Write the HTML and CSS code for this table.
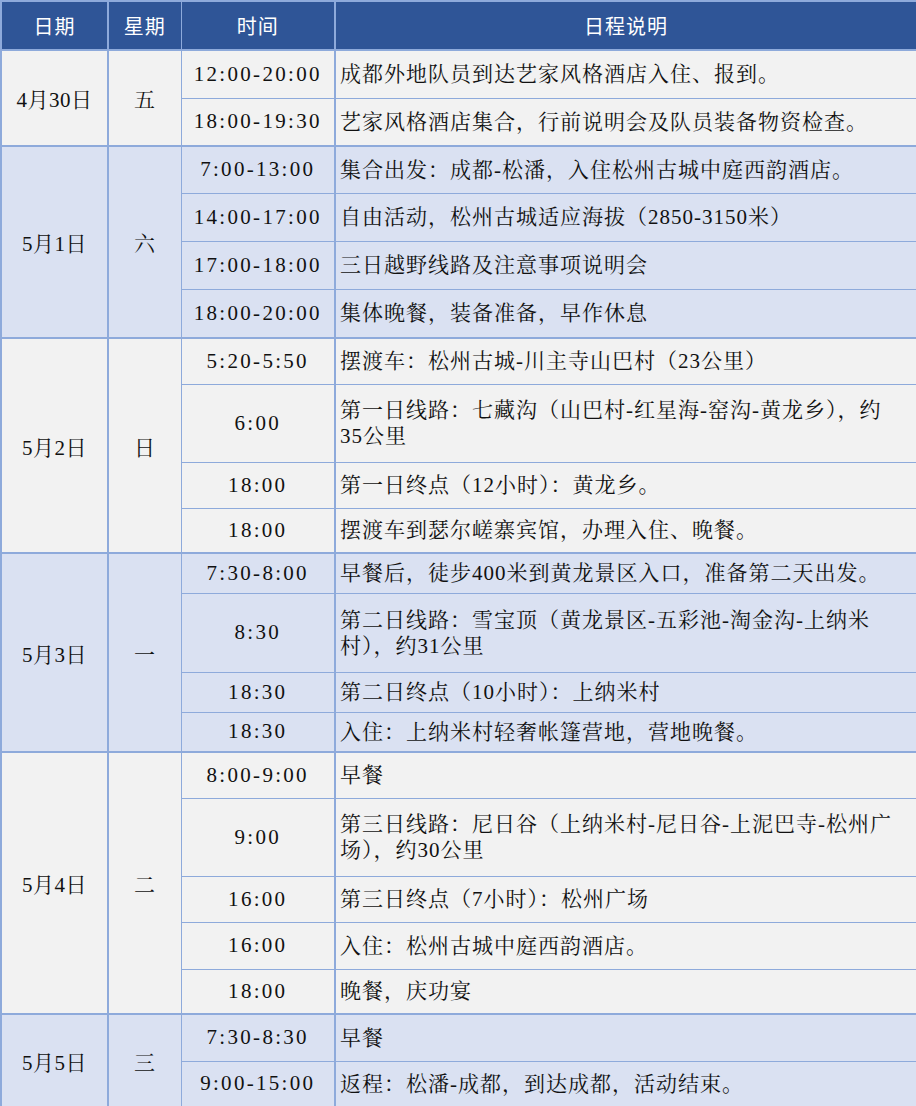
FILE: index.html
```html
<!DOCTYPE html>
<html lang="zh-CN">
<head>
<meta charset="utf-8">
<title>日程安排</title>
<link rel="stylesheet" href="styles.css">
</head>
<body>
<table class="sched">
  <colgroup>
    <col class="c-date"><col class="c-week"><col class="c-time"><col class="c-desc">
  </colgroup>
  <thead>
    <tr class="h49">
      <th>日期</th><th>星期</th><th class="time">时间</th><th>日程说明</th>
    </tr>
  </thead>
  <tbody class="gray">
    <tr class="grp h48">
      <td class="date" rowspan="2">4月30日</td><td class="week" rowspan="2">五</td>
      <td class="time">12:00-20:00</td><td class="desc">成都外地队员到达艺家风格酒店入住、报到。</td>
    </tr>
    <tr class="h48">
      <td class="time">18:00-19:30</td><td class="desc">艺家风格酒店集合，行前说明会及队员装备物资检查。</td>
    </tr>
  </tbody>
  <tbody class="blue">
    <tr class="grp h47">
      <td class="date" rowspan="4">5月1日</td><td class="week" rowspan="4">六</td>
      <td class="time">7:00-13:00</td><td class="desc">集合出发：成都-松潘，入住松州古城中庭西韵酒店。</td>
    </tr>
    <tr class="h48">
      <td class="time">14:00-17:00</td><td class="desc">自由活动，松州古城适应海拔（2850-3150米）</td>
    </tr>
    <tr class="h48">
      <td class="time">17:00-18:00</td><td class="desc">三日越野线路及注意事项说明会</td>
    </tr>
    <tr class="h49">
      <td class="time">18:00-20:00</td><td class="desc">集体晚餐，装备准备，早作休息</td>
    </tr>
  </tbody>
  <tbody class="gray">
    <tr class="grp h46">
      <td class="date" rowspan="4">5月2日</td><td class="week" rowspan="4">日</td>
      <td class="time">5:20-5:50</td><td class="desc">摆渡车：松州古城-川主寺山巴村（23公里）</td>
    </tr>
    <tr class="h78">
      <td class="time">6:00</td><td class="desc">第一日线路：七藏沟（山巴村-红星海-窑沟-黄龙乡），约<br>35公里</td>
    </tr>
    <tr class="h46">
      <td class="time">18:00</td><td class="desc">第一日终点（12小时）：黄龙乡。</td>
    </tr>
    <tr class="h45">
      <td class="time">18:00</td><td class="desc">摆渡车到瑟尔嵯寨宾馆，办理入住、晚餐。</td>
    </tr>
  </tbody>
  <tbody class="blue">
    <tr class="grp h40">
      <td class="date" rowspan="4">5月3日</td><td class="week" rowspan="4">一</td>
      <td class="time">7:30-8:00</td><td class="desc">早餐后，徒步400米到黄龙景区入口，准备第二天出发。</td>
    </tr>
    <tr class="h79">
      <td class="time">8:30</td><td class="desc">第二日线路：雪宝顶（黄龙景区-五彩池-淘金沟-上纳米<br>村），约31公里</td>
    </tr>
    <tr class="h40">
      <td class="time">18:30</td><td class="desc">第二日终点（10小时）：上纳米村</td>
    </tr>
    <tr class="h40">
      <td class="time">18:30</td><td class="desc">入住：上纳米村轻奢帐篷营地，营地晚餐。</td>
    </tr>
  </tbody>
  <tbody class="gray">
    <tr class="grp h46">
      <td class="date" rowspan="5">5月4日</td><td class="week" rowspan="5">二</td>
      <td class="time">8:00-9:00</td><td class="desc">早餐</td>
    </tr>
    <tr class="h78">
      <td class="time">9:00</td><td class="desc">第三日线路：尼日谷（上纳米村-尼日谷-上泥巴寺-松州广<br>场），约30公里</td>
    </tr>
    <tr class="h46">
      <td class="time">16:00</td><td class="desc">第三日终点（7小时）：松州广场</td>
    </tr>
    <tr class="h47">
      <td class="time">16:00</td><td class="desc">入住：松州古城中庭西韵酒店。</td>
    </tr>
    <tr class="h45">
      <td class="time">18:00</td><td class="desc">晚餐，庆功宴</td>
    </tr>
  </tbody>
  <tbody class="blue">
    <tr class="grp h47">
      <td class="date" rowspan="2">5月5日</td><td class="week" rowspan="2">三</td>
      <td class="time">7:30-8:30</td><td class="desc">早餐</td>
    </tr>
    <tr class="h46">
      <td class="time">9:00-15:00</td><td class="desc">返程：松潘-成都，到达成都，活动结束。</td>
    </tr>
  </tbody>
</table>
</body>
</html>
```
FILE: styles.css
```css
html, body {
  margin: 0;
  padding: 0;
  background: #ffffff;
}

.sched {
  width: 916px;
  table-layout: fixed;
  border-collapse: collapse;
  border: 2px solid #8eaadb;
  font-family: "Liberation Serif", "Noto Serif CJK SC", "Noto Sans CJK SC", serif;
  font-size: 21px;
  color: #111111;
}

.c-date { width: 107px; }
.c-week { width: 73px; }
.c-time { width: 154px; }
.c-desc { width: 582px; }

.sched th,
.sched td {
  border: 1px solid #8eaadb;
  padding: 0;
  vertical-align: middle;
}

.sched th {
  background: #2f5597;
  color: #ffffff;
  font-family: "Noto Sans CJK SC", "Liberation Sans", sans-serif;
  font-weight: normal;
  font-size: 20px;
  letter-spacing: 1px;
  text-align: center;
  border-bottom: 2px solid #8eaadb;
  border-top: 2px solid #8eaadb;
}

.sched th:first-child,
.sched td.date {
  border-right: 2px solid #8eaadb;
}

.sched th.time,
.sched td.time {
  border-right: 2px solid #8eaadb;
}

.sched tr.grp td {
  border-top: 2px solid #8eaadb;
}

.gray td { background: #f2f2f2; }
.blue td { background: #dae1f2; }

.date,
.week {
  text-align: center;
  letter-spacing: 0.5px;
}

.time {
  text-align: center;
  letter-spacing: 2.3px;
}

.desc {
  text-align: left;
  padding-left: 4px !important;
  letter-spacing: 1px;
  line-height: 26px;
}

.h40 { height: 40px; }
.h45 { height: 45px; }
.h46 { height: 46px; }
.h47 { height: 47px; }
.h48 { height: 48px; }
.h49 { height: 49px; }
.h78 { height: 78px; }
.h79 { height: 79px; }
```
